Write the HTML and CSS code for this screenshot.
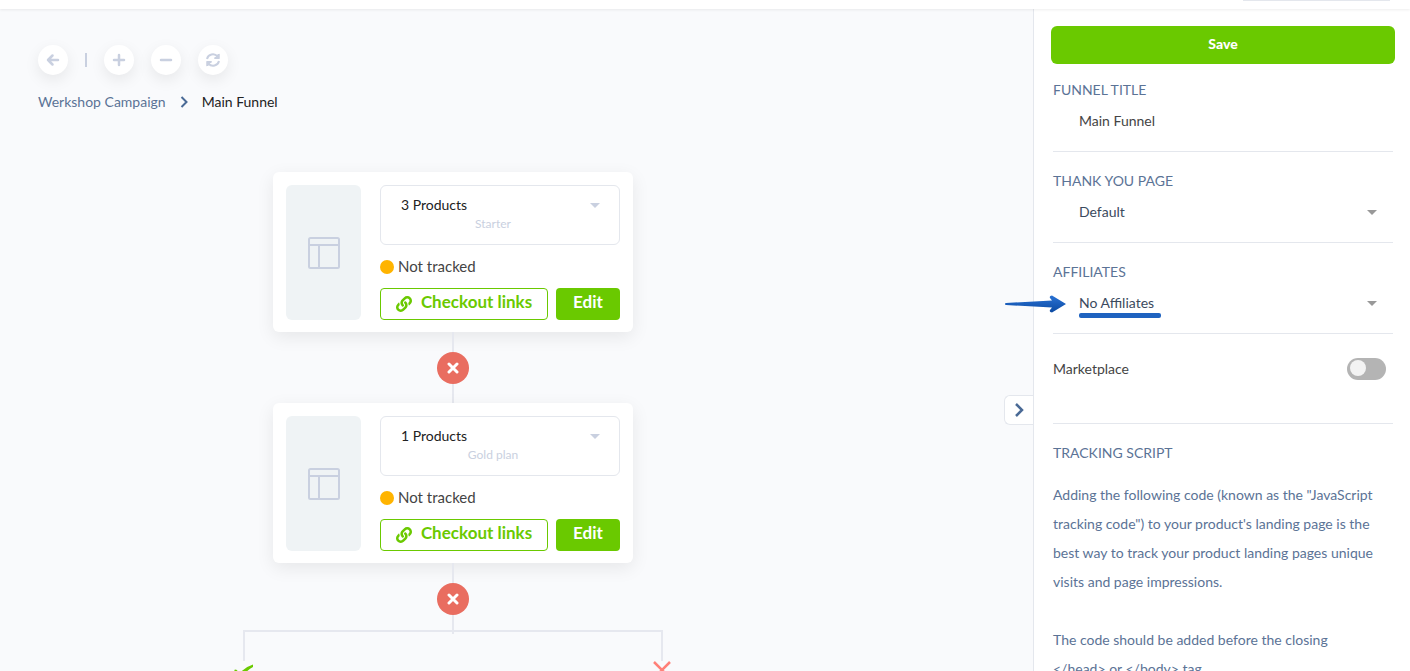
FILE: index.html
```html
<!DOCTYPE html>
<html lang="en">
  <head>
    <meta charset="utf-8">
    <title>Main Funnel</title>
    <link rel="stylesheet" href="styles.css">
  </head>
  <body>
    <header class="topbar">
      <div class="topbar-box"></div>
    </header>
    <div class="layout">
      <main class="canvas">
        <div class="toolbar">
          <button class="tool" aria-label="Back">
            <svg width="14" height="14" viewBox="0 0 14 14"><path d="M12 7H2M6.500 2.500L2 7l4.500 4.500"/></svg>
          </button>
          <span class="tool-divider"></span>
          <button class="tool" aria-label="Zoom in">
            <svg width="14" height="14" viewBox="0 0 14 14"><path d="M7 2v10M2 7h10"/></svg>
          </button>
          <button class="tool" aria-label="Zoom out">
            <svg width="14" height="14" viewBox="0 0 14 14"><path d="M2 7h10"/></svg>
          </button>
          <button class="tool" aria-label="Refresh">
            <svg class="refresh" width="14" height="14" viewBox="0 0 14 14"><path d="M1 6a6 6 0 0 1 10.500-2.500M1.500 13V9h4M13 8a6 6 0 0 1-10.500 2.500M12.500 1v4h-4"/><path class="tip" d="M13.500 .5v5.500H8zM.5 13.500V8H6z"/></svg>
          </button>
        </div>
        <nav class="breadcrumb">
          <a href="#">Werkshop Campaign</a>
          <svg width="8" height="12" viewBox="0 0 8 12"><path d="M1.500 1l5 5-5 5"/></svg>
          <span>Main Funnel</span>
        </nav>

        <div class="funnel">
          <section class="card">
            <div class="thumb">
              <svg width="32" height="32" viewBox="0 0 32 32"><rect x="1" y="1" width="30" height="30" rx="1.500"/><path d="M1 8h30M11 8v23"/></svg>
            </div>
            <div class="card-body">
              <div class="product-box">
                <select class="product-select" aria-label="Products">
                  <option>3 Products</option>
                </select>
                <span class="plan">Starter</span>
              </div>
              <div class="status"><span class="dot"></span>Not tracked</div>
              <div class="actions">
                <button class="btn btn-outline">
                  <svg width="16" height="16" viewBox="0 0 512 512"><path d="M326.600 185.400c59.700 59.800 58.900 155.700.4 214.600-.1.100-.2.300-.4.400l-67.200 67.200c-59.300 59.300-155.700 59.300-215 0-59.300-59.300-59.300-155.700 0-215l37.100-37.100c9.800-9.800 26.800-3.300 27.300 10.600.6 17.700 3.800 35.500 9.700 52.700 2 5.800.6 12.300-3.800 16.600l-13.100 13.100c-28 28-28.900 73.700-1.200 102 28 28.600 74.100 28.700 102.300.5l67.200-67.200c28.200-28.200 28.100-73.800 0-101.800-3.700-3.700-7.400-6.600-10.300-8.600a16 16 0 0 1-6.900-12.600c-.4-10.600 3.300-21.500 11.700-29.800l21.100-21.100c5.500-5.500 14.200-6.200 20.600-1.700a152.500 152.500 0 0 1 20.500 17.200zM467.500 44.400c-59.300-59.300-155.700-59.300-215 0l-67.200 67.200c-.1.100-.3.300-.4.400-58.600 58.900-59.400 154.800.4 214.600a152.500 152.500 0 0 0 20.500 17.200c6.400 4.500 15.100 3.800 20.600-1.700l21.100-21.100c8.400-8.400 12.100-19.200 11.700-29.800a16 16 0 0 0-6.900-12.600c-2.900-2-6.600-4.900-10.300-8.600-28.100-28.100-28.200-73.600 0-101.800l67.200-67.200c28.200-28.200 74.300-28.100 102.300.5 27.800 28.300 26.900 73.900-1.200 102l-13.100 13.100c-4.400 4.400-5.800 10.800-3.800 16.600 5.900 17.200 9 35 9.700 52.700.5 13.900 17.500 20.400 27.300 10.600l37.100-37.100c59.300-59.300 59.300-155.700 0-215z"/></svg>
                  <span>Checkout links</span>
                </button>
                <button class="btn btn-solid">Edit</button>
              </div>
            </div>
          </section>
          <div class="connector">
            <button class="remove" aria-label="Remove">
              <svg width="12" height="12" viewBox="0 0 12 12"><path d="M2 2l8 8M10 2l-8 8"/></svg>
            </button>
          </div>
          <section class="card">
            <div class="thumb">
              <svg width="32" height="32" viewBox="0 0 32 32"><rect x="1" y="1" width="30" height="30" rx="1.500"/><path d="M1 8h30M11 8v23"/></svg>
            </div>
            <div class="card-body">
              <div class="product-box">
                <select class="product-select" aria-label="Products">
                  <option>1 Products</option>
                </select>
                <span class="plan">Gold plan</span>
              </div>
              <div class="status"><span class="dot"></span>Not tracked</div>
              <div class="actions">
                <button class="btn btn-outline">
                  <svg width="16" height="16" viewBox="0 0 512 512"><path d="M326.600 185.400c59.700 59.800 58.900 155.700.4 214.600-.1.100-.2.300-.4.400l-67.200 67.200c-59.300 59.300-155.700 59.300-215 0-59.300-59.300-59.300-155.700 0-215l37.100-37.100c9.800-9.800 26.800-3.300 27.300 10.600.6 17.700 3.800 35.500 9.700 52.700 2 5.800.6 12.300-3.800 16.600l-13.100 13.100c-28 28-28.900 73.700-1.200 102 28 28.600 74.100 28.700 102.300.5l67.200-67.200c28.200-28.200 28.100-73.800 0-101.800-3.700-3.700-7.400-6.600-10.300-8.600a16 16 0 0 1-6.900-12.600c-.4-10.600 3.300-21.500 11.700-29.800l21.100-21.100c5.500-5.500 14.200-6.200 20.600-1.700a152.500 152.500 0 0 1 20.500 17.200zM467.500 44.400c-59.300-59.300-155.700-59.300-215 0l-67.200 67.200c-.1.100-.3.300-.4.400-58.600 58.900-59.400 154.800.4 214.600a152.500 152.500 0 0 0 20.500 17.200c6.400 4.500 15.100 3.800 20.600-1.700l21.100-21.100c8.400-8.400 12.100-19.200 11.700-29.800a16 16 0 0 0-6.900-12.600c-2.900-2-6.600-4.900-10.300-8.600-28.100-28.100-28.200-73.600 0-101.800l67.200-67.200c28.200-28.200 74.300-28.100 102.300.5 27.800 28.300 26.900 73.900-1.200 102l-13.100 13.100c-4.400 4.400-5.800 10.800-3.800 16.600 5.900 17.200 9 35 9.700 52.700.5 13.900 17.500 20.400 27.300 10.600l37.100-37.100c59.300-59.300 59.300-155.700 0-215z"/></svg>
                  <span>Checkout links</span>
                </button>
                <button class="btn btn-solid">Edit</button>
              </div>
            </div>
          </section>
          <div class="connector">
            <button class="remove" aria-label="Remove">
              <svg width="12" height="12" viewBox="0 0 12 12"><path d="M2 2l8 8M10 2l-8 8"/></svg>
            </button>
          </div>
          <div class="branch"></div>
          <div class="branch-ends">
            <svg width="20" height="18" viewBox="0 0 20 18"><path class="yes" d="M0 9l2-.5L6 12Q11 6 19 3.500V6Q12 10 7 17Z"/></svg>
            <svg width="20" height="18" viewBox="0 0 20 18"><path class="no" d="M2 1l16 16M18 1L2 17"/></svg>
          </div>
        </div>
      </main>

      <aside class="sidebar">
        <button class="collapse" aria-label="Collapse panel">
          <svg width="10" height="14" viewBox="0 0 10 14"><path d="M2 1l6 6-6 6"/></svg>
        </button>
        <button class="save">Save</button>
        <div class="field field-first">
          <label for="title">FUNNEL TITLE</label>
          <input id="title" class="control" type="text" value="Main Funnel">
        </div>
        <div class="field">
          <label for="thanks">THANK YOU PAGE</label>
          <select id="thanks" class="control">
            <option>Default</option>
          </select>
        </div>
        <div class="field field-marked">
          <label for="affiliates">AFFILIATES</label>
          <select id="affiliates" class="control">
            <option>No Affiliates</option>
          </select>
          <svg class="pointer" width="64" height="20" viewBox="0 0 64 20">
            <defs>
              <linearGradient id="blue" x1="0" y1="0" x2="0" y2="1">
                <stop offset="0" stop-color="#2a72d4"/>
                <stop offset="1" stop-color="#0b4aa2"/>
              </linearGradient>
            </defs>
            <path fill="url(#blue)" d="M1 10Q1 9 2 9L48 6.500 46 4q-1-2 2-2.500L62 10 48 18.500q-3-.5-2-2.500l2-2.500L2 11Q1 11 1 10Z"/>
          </svg>
          <span class="underline"></span>
        </div>
        <div class="toggle-row">
          <label for="market">Marketplace</label>
          <input id="market" class="toggle" type="checkbox">
        </div>
        <div class="tracking">
          <h2>TRACKING SCRIPT</h2>
          <p>Adding the following code (known as the "JavaScript tracking code") to your product's landing page is the best way to track your product landing pages unique visits and page impressions.</p>
          <p>The code should be added before the closing<br>&lt;/head&gt; or &lt;/body&gt; tag.</p>
        </div>
      </aside>
    </div>
  </body>
</html>
```

FILE: styles.css
```css
* {
  box-sizing: border-box;
}

body {
  margin: 0;
  height: 100vh;
  display: flex;
  flex-direction: column;
  overflow: hidden;
  background: #f9fafc;
  color: #444;
  font-family: Lato, "Liberation Sans", sans-serif;
  font-size: 14px;
}

button, input, select {
  margin: 0;
  font: inherit;
  color: inherit;
}

button {
  display: flex;
  align-items: center;
  justify-content: center;
  padding: 0;
  border: 0;
}

svg {
  flex: none;
  fill: none;
  stroke: currentColor;
}

.topbar {
  flex: none;
  height: 9px;
  padding: 0 20px;
  background: #fff;
  box-shadow: 0 1px 3px rgba(0, 0, 0, 0.07);
  z-index: 1;
}

.topbar-box {
  width: 147px;
  height: 1px;
  margin-left: auto;
  background: #e4e7ed;
}

.layout {
  flex: 1;
  min-height: 0;
  display: flex;
}

/* canvas */
.canvas {
  flex: 1;
  min-width: 0;
  padding: 36px 38px 0;
  overflow: hidden;
}

.toolbar {
  display: flex;
  align-items: center;
  gap: 17px;
}

.tool {
  width: 30px;
  height: 30px;
  border-radius: 50%;
  background: #fff;
  color: #c9d0e0;
  box-shadow: 0 5px 15px rgba(0, 0, 0, 0.08);
}

.tool svg {
  stroke-width: 2.5;
  stroke-linecap: round;
  stroke-linejoin: round;
}

.tool .refresh {
  stroke-width: 2;
  stroke-linecap: butt;
}

.tool .tip {
  fill: currentColor;
  stroke: none;
}

.tool-divider {
  width: 2px;
  height: 14px;
  background: #c9d0e0;
}

.breadcrumb {
  display: flex;
  align-items: center;
  gap: 14px;
  margin-top: 15px;
  line-height: 24px;
  color: #222;
}

.breadcrumb a {
  color: #5b7396;
  text-decoration: none;
}

.breadcrumb svg {
  color: #4a6a96;
  stroke-width: 2;
}

.funnel {
  width: 420px;
  margin: 58px 0 0 205px;
  display: flex;
  flex-direction: column;
  align-items: center;
}

.card {
  width: 360px;
  padding: 13px 13px 12px;
  display: flex;
  gap: 19px;
  border-radius: 6px;
  background: #fff;
  box-shadow: 0 5px 18px rgba(0, 0, 0, 0.08);
}

.thumb {
  width: 75px;
  display: flex;
  align-items: center;
  justify-content: center;
  border-radius: 6px;
  background: #eff3f5;
  color: #c9d0e0;
}

.thumb svg {
  stroke-width: 2;
}

.card-body {
  flex: 1;
}

.product-box {
  height: 60px;
  padding: 8px 14px 0 20px;
  display: flex;
  flex-direction: column;
  border: 1px solid #e4e7ed;
  border-radius: 6px;
}

.product-select,
select.control {
  appearance: none;
  outline: 0;
}

.product-select {
  height: 20px;
  padding: 0;
  border: 0;
  color: #222;
  background: url("data:image/svg+xml,%3Csvg xmlns='http://www.w3.org/2000/svg' width='10' height='5'%3E%3Cpath d='M0 0h10L5 5z' fill='%23c9d0e0'/%3E%3C/svg%3E") no-repeat right 5px bottom 6px;
}

.plan {
  padding-right: 20px;
  line-height: 20px;
  text-align: center;
  font-size: 12px;
  color: #c9d0e0;
}

.status {
  display: flex;
  align-items: center;
  gap: 4px;
  line-height: 43px;
  font-size: 15px;
}

.dot {
  width: 14px;
  height: 14px;
  border-radius: 50%;
  background: #ffb400;
}

.actions {
  display: flex;
  gap: 8px;
}

.btn {
  height: 32px;
  border-radius: 4px;
  font-size: 17px;
  font-weight: bold;
}

.btn-outline {
  flex: 1;
  gap: 9px;
  border: 1px solid #6ac900;
  background: #fff;
  color: #6ac900;
}

.btn-outline svg {
  fill: currentColor;
  stroke: none;
}

.btn span,
.btn-solid {
  padding-bottom: 5px;
}

.btn-solid {
  width: 64px;
  background: #6ac900;
  color: #fff;
}

.connector {
  display: flex;
  flex-direction: column;
  align-items: center;
}

.connector::before,
.connector::after {
  content: "";
  width: 2px;
  height: 20px;
  background: #e6e8ef;
}

.connector::after {
  height: 19px;
}

.remove {
  width: 32px;
  height: 32px;
  border-radius: 50%;
  background: #e96d60;
  color: #fff;
}

.remove svg {
  stroke-width: 3;
  stroke-linecap: round;
}

.branch {
  width: 100%;
  height: 31px;
  margin-top: -4px;
  border: 2px solid #e6e8ef;
  border-bottom: 0;
}

.branch-ends {
  width: 438px;
  display: flex;
  justify-content: space-between;
}

.yes {
  fill: #6ac900;
  stroke: none;
}

.no {
  stroke: #ff8078;
  stroke-width: 2.5;
}

/* settings panel */
.sidebar {
  position: relative;
  flex: none;
  width: 377px;
  padding: 17px 17px 0 19px;
  border-left: 1px solid #e4e7ed;
  background: #fff;
}

.collapse {
  position: absolute;
  top: 386px;
  left: -30px;
  width: 29px;
  height: 30px;
  border: 1px solid #e4e7ed;
  border-right: 0;
  border-radius: 6px 0 0 6px;
  background: #fff;
  color: #4a6a96;
}

.collapse svg {
  stroke-width: 2.5;
}

.save {
  width: calc(100% + 4px);
  height: 38px;
  margin: 0 -2px;
  padding-bottom: 4px;
  border-radius: 6px;
  background: #6ac900;
  color: #fff;
  font-weight: 900;
}

.field {
  padding: 15px 0 13px;
  border-bottom: 1px solid #e4e7ed;
}

.field-first {
  padding-top: 12px;
}

.field label,
.tracking h2 {
  display: block;
  margin: 0;
  font-size: 14px;
  font-weight: normal;
  line-height: 28px;
  color: #5b7396;
}

.control {
  display: block;
  width: 100%;
  height: 34px;
  padding: 0 26px 1px;
  border: 0;
  outline: 0;
}

select.control {
  color: #3b4a5e;
  background: url("data:image/svg+xml,%3Csvg xmlns='http://www.w3.org/2000/svg' width='10' height='5'%3E%3Cpath d='M0 0h10L5 5z' fill='%23999'/%3E%3C/svg%3E") no-repeat right 16px center;
}

.field-marked {
  position: relative;
}

.pointer {
  position: absolute;
  top: 51px;
  left: -49px;
  stroke: none;
}

.underline {
  position: absolute;
  top: 70px;
  left: 26px;
  width: 82px;
  height: 5px;
  border-radius: 2px;
  background: #1f63c0;
}

.toggle-row {
  display: flex;
  align-items: center;
  justify-content: space-between;
  height: 90px;
  padding: 0 7px 20px 0;
  border-bottom: 1px solid #e4e7ed;
}

.toggle {
  appearance: none;
  width: 39px;
  height: 22px;
  padding: 2px 3px;
  border-radius: 11px;
  background: #b4b4b4;
}

.toggle::before {
  content: "";
  display: block;
  width: 16px;
  height: 16px;
  border-radius: 50%;
  background: #f3f3f3;
}

.tracking {
  padding-top: 15px;
  color: #5b7396;
}

.tracking p {
  margin: 13px 0 29px;
  line-height: 29px;
}

.tracking p + p {
  margin-top: 0;
}
```
